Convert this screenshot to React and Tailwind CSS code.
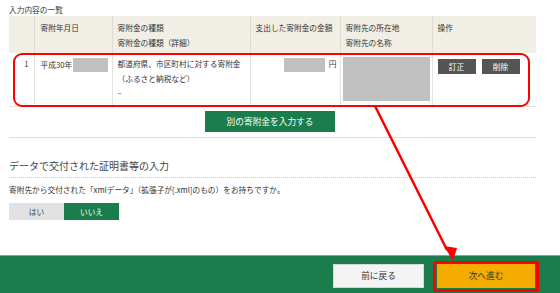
import React from "react";

const font = { fontFamily: '"Noto Sans CJK JP", "Noto Sans", sans-serif' };

export default function App() {
  return (
    <div className="relative w-[560px] h-[293px] overflow-hidden bg-white text-[#333]" style={font}>
      <div className="pl-[9px] pr-[24px]">
        <div className="pt-[4px] h-[16px] text-[7.7px] leading-[12px] text-[#333]">入力内容の一覧</div>
        <table className="w-[527px] table-fixed border-collapse text-[7.7px] leading-[15px]">
          <colgroup>
            <col className="w-[25px]" />
            <col className="w-[78px]" />
            <col className="w-[138px]" />
            <col className="w-[90px]" />
            <col className="w-[92px]" />
            <col className="w-[104px]" />
          </colgroup>
          <thead>
            <tr className="h-[37px] bg-[#f1eee5] align-top">
              <th className="border-r border-[#dedbd2] font-normal"></th>
              <th className="border-r border-[#dedbd2] font-normal text-left pl-[6px] pt-[4px]">寄附年月日</th>
              <th className="border-r border-[#dedbd2] font-normal text-left pl-[5px] pt-[4px]">
                寄附金の種類<br />寄附金の種類（詳細）
              </th>
              <th className="border-r border-[#dedbd2] font-normal text-left pl-[5px] pt-[4px] whitespace-nowrap">支出した寄附金の金額</th>
              <th className="border-r border-[#dedbd2] font-normal text-left pl-[5px] pt-[4px]">
                寄附先の所在地<br />寄附先の名称
              </th>
              <th className="font-normal text-left pl-[5px] pt-[4px]">操作</th>
            </tr>
          </thead>
          <tbody>
            <tr className="h-[53px] align-top border-b border-[#e2e2e2] leading-[14.5px]">
              <td className="border-r border-[#e2e2e2] text-right pr-[5px] pt-[4px]">1</td>
              <td className="border-r border-[#e2e2e2] pl-[6px] pt-[5px]">
                <div className="flex items-start">
                  <span className="leading-[14px]">平成30年</span>
                  <span className="ml-[1px] w-[35px] h-[14px] bg-[#c0c0c0]"></span>
                </div>
              </td>
              <td className="border-r border-[#e2e2e2] pl-[5px] pt-[4px]">
                都道府県、市区町村に対する寄附金<br />（ふるさと納税など）<br />–
              </td>
              <td className="border-r border-[#e2e2e2] pr-[3px] pt-[5px]">
                <div className="flex items-start justify-end gap-[4px]">
                  <span className="w-[41px] h-[14px] bg-[#c0c0c0]"></span>
                  <span className="leading-[12px]">円</span>
                </div>
              </td>
              <td className="border-r border-[#e2e2e2] px-[2px] pt-[4px]">
                <div className="h-[44px] bg-[#c0c0c0]"></div>
              </td>
              <td className="pl-[5px] pt-[6px]">
                <div className="flex gap-[6px]">
                  <span className="w-[38px] h-[15px] bg-[#555] text-white text-[7.7px] leading-[15px] text-center">訂正</span>
                  <span className="w-[38px] h-[15px] bg-[#555] text-white text-[7.7px] leading-[15px] text-center">削除</span>
                </div>
              </td>
            </tr>
          </tbody>
        </table>
        <div className="flex justify-center mt-[4px] pr-[5px]">
          <div className="w-[130px] h-[21px] bg-[#1b7d4b] text-white text-[8.7px] leading-[21px] text-center">別の寄附金を入力する</div>
        </div>
        <div className="mt-[5px] h-[1px] bg-[#dddddd]"></div>
        <div className="mt-[21px] text-[10px] leading-[14px] text-[#444]">データで交付された証明書等の入力</div>
        <div className="mt-[4px] border-t border-dotted border-[#efc76a]"></div>
        <div className="mt-[6px] text-[7.7px] leading-[12px]">寄附先から交付された「xmlデータ」（拡張子が[.xml]のもの）をお持ちですか。</div>
        <div className="mt-[7px] flex">
          <span className="w-[55px] h-[17px] bg-[#e2e2e2] text-[7.7px] leading-[17px] text-center text-[#444]">はい</span>
          <span className="w-[55px] h-[17px] bg-[#1b7d4b] text-[7.7px] leading-[17px] text-center text-white">いいえ</span>
        </div>
      </div>
      <div className="absolute left-0 right-0 bottom-0 h-[38px] bg-[#1b7d4b] border-t border-[#6fb28c] flex items-start justify-end pr-[25px] pt-[7px] gap-[13px]">
        <div className="mt-[1px] w-[91px] h-[24px] bg-[#f4f4f4] border border-[#d8d8d8] text-[8.7px] leading-[22px] text-center text-[#333]">前に戻る</div>
        <div className="w-[98px] h-[25px] bg-[#f5ac00] text-[8.7px] leading-[25px] text-center text-[#333]">次へ進む</div>
      </div>
      <div className="absolute left-[433px] top-[261px] w-[106px] h-[31px] border-[3px] border-[#ff0000]"></div>
      <div className="absolute left-[13px] top-[53px] w-[517px] h-[54px] border-[2.5px] border-[#ff0000] rounded-[9px]"></div>
      <svg className="absolute left-0 top-0" width="560" height="293" viewBox="0 0 560 293">
        <line x1="375" y1="106" x2="447" y2="250" stroke="#ff0000" strokeWidth="2.5" />
        <polygon points="453,261 444,246 457,248" fill="#ff0000" />
      </svg>
    </div>
  );
}
